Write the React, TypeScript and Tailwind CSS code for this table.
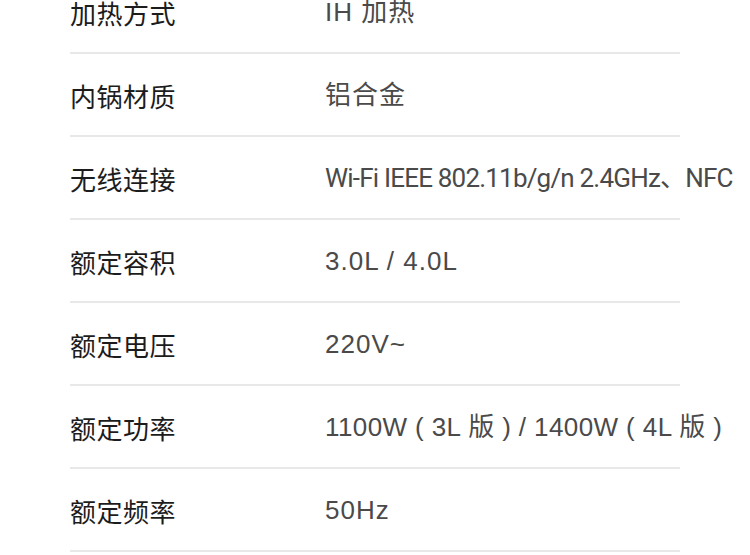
const specs = [
  { label: "加热方式", value: "IH 加热" },
  { label: "内锅材质", value: "铝合金" },
  { label: "无线连接", value: "Wi-Fi IEEE 802.11b/g/n 2.4GHz、NFC", narrow: true },
  { label: "额定容积", value: "3.0L / 4.0L" },
  { label: "额定电压", value: "220V~" },
  { label: "额定功率", value: "1100W ( 3L 版 ) / 1400W ( 4L 版 )", snug: true },
  { label: "额定频率", value: "50Hz" },
];

export default function App() {
  return (
    <div className="w-[750px] h-[555px] overflow-hidden bg-white">
      <div className="ml-[70px] w-[610px] -mt-[29px]">
        {specs.map((s, i) => (
          <div
            key={i}
            className="flex items-center h-[83px] border-b-2 border-[#e8e8e8] pt-[2px]"
          >
            <div className="w-[255px] shrink-0 text-[26px] tracking-[0.5px] text-[#1c1c1c] font-['Noto_Sans_CJK_SC',sans-serif]">
              {s.label}
            </div>
            <div
              className={
                s.narrow
                  ? "whitespace-nowrap text-[26px] tracking-[-0.8px] text-[#4a4a4a] font-['Roboto','Noto_Sans_CJK_SC',sans-serif]"
                  : s.snug
                  ? "whitespace-nowrap text-[26px] tracking-[0.4px] text-[#4a4a4a] font-['Liberation_Sans','Noto_Sans_CJK_SC',sans-serif]"
                  : "whitespace-nowrap text-[26px] tracking-[1px] text-[#4a4a4a] font-['Liberation_Sans','Noto_Sans_CJK_SC',sans-serif]"
              }
            >
              {s.value}
            </div>
          </div>
        ))}
      </div>
    </div>
  );
}
